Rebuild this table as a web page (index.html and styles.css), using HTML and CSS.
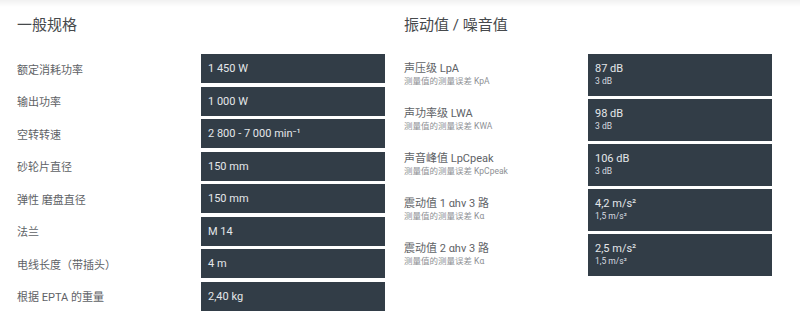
FILE: index.html
```html
<!DOCTYPE html>
<html lang="zh">
<head>
<meta charset="utf-8">
<title>规格</title>
<link rel="stylesheet" href="styles.css">
</head>
<body>
<div class="page">
  <section class="col">
    <h2 class="title">一般规格</h2>
    <div class="table simple">
      <div class="label">额定消耗功率</div><div class="value">1 450 W</div>
      <div class="label">输出功率</div><div class="value">1 000 W</div>
      <div class="label">空转转速</div><div class="value">2 800 - 7 000 min⁻¹</div>
      <div class="label">砂轮片直径</div><div class="value">150 mm</div>
      <div class="label">弹性 磨盘直径</div><div class="value">150 mm</div>
      <div class="label">法兰</div><div class="value">M 14</div>
      <div class="label">电线长度（带插头）</div><div class="value">4 m</div>
      <div class="label">根据 EPTA 的重量</div><div class="value">2,40 kg</div>
    </div>
  </section>
  <section class="col">
    <h2 class="title">振动值 / 噪音值</h2>
    <div class="table double">
      <div class="label"><span class="main">声压级 LpA</span><span class="sub">测量值的测量误差 KpA</span></div>
      <div class="value"><span class="main">87 dB</span><span class="sub">3 dB</span></div>
      <div class="label"><span class="main">声功率级 LWA</span><span class="sub">测量值的测量误差 KWA</span></div>
      <div class="value"><span class="main">98 dB</span><span class="sub">3 dB</span></div>
      <div class="label"><span class="main">声音峰值 LpCpeak</span><span class="sub">测量值的测量误差 KpCpeak</span></div>
      <div class="value"><span class="main">106 dB</span><span class="sub">3 dB</span></div>
      <div class="label"><span class="main">震动值 1 αhv 3 路</span><span class="sub">测量值的测量误差 Kα</span></div>
      <div class="value"><span class="main">4,2 m/s²</span><span class="sub">1,5 m/s²</span></div>
      <div class="label"><span class="main">震动值 2 αhv 3 路</span><span class="sub">测量值的测量误差 Kα</span></div>
      <div class="value"><span class="main">2,5 m/s²</span><span class="sub">1,5 m/s²</span></div>
    </div>
  </section>
</div>
</body>
</html>
```
FILE: styles.css
```css
html, body {
  margin: 0;
  padding: 0;
}
body {
  background: linear-gradient(#f1f1f1, #ffffff 7px) no-repeat;
  background-color: #ffffff;
  font-family: Roboto, "Noto Sans CJK SC", sans-serif;
  width: 800px;
  height: 320px;
  overflow: hidden;
}
.page {
  display: grid;
  grid-template-columns: 368px 368px;
  column-gap: 19px;
  padding: 0 17px;
}
.title {
  margin: 15px 0 19px;
  font-size: 15px;
  line-height: 20px;
  font-weight: 400;
  color: #46494c;
}
.table {
  display: grid;
  grid-template-columns: 184px 184px;
  align-items: center;
}
.simple {
  grid-auto-rows: 29px;
  row-gap: 3.5px;
}
.double {
  grid-auto-rows: 41.7px;
  row-gap: 3.35px;
}
.label {
  font-size: 11px;
  color: #5e6266;
}
.value {
  height: 100%;
  box-sizing: border-box;
  background: #323d47;
  color: #e4e7ea;
  font-size: 11px;
  padding-left: 7px;
  display: flex;
  align-items: center;
}
.double .value {
  flex-direction: column;
  align-items: flex-start;
  justify-content: center;
}
.main {
  display: block;
  font-size: 11px;
  line-height: 13px;
}
.sub {
  display: block;
  font-size: 8.5px;
  line-height: 13px;
}
.label .sub {
  color: #8e9195;
}
.value .sub {
  color: #d8dce0;
}
```
